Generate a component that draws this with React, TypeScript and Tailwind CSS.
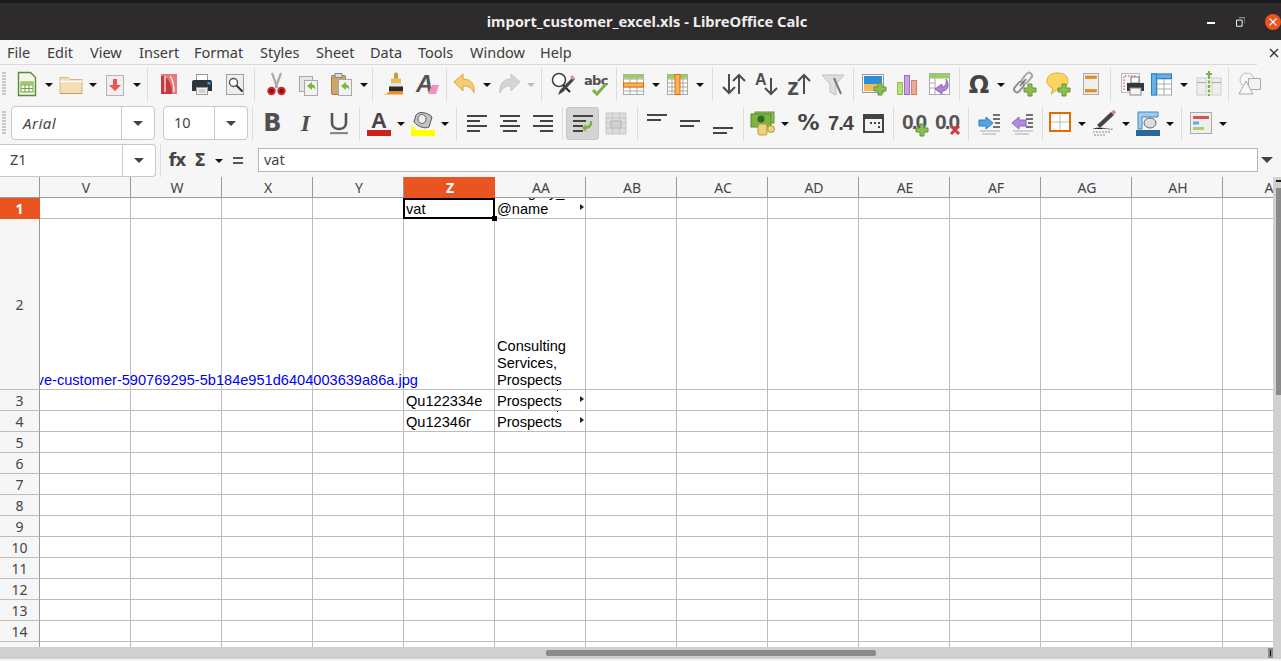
import type { ReactNode } from "react"

const ink = "#4d4d4d"

function Svg({ children }: { children: ReactNode }) {
  return (
    <svg width="26" height="26" viewBox="0 0 26 26" className="block overflow-visible">
      {children}
    </svg>
  )
}

// toolbar slot for an icon
function I({ children, className = "" }: { children?: ReactNode; className?: string }) {
  return <div className={`w-[33px] h-[33px] shrink-0 flex items-center justify-center ${className}`}>{children}</div>
}

// little dropdown arrow
function A({ className = "" }: { className?: string }) {
  return (
    <div className={`w-[11px] shrink-0 flex justify-center ${className}`}>
      <div className="w-0 h-0 border-l-[4px] border-r-[4px] border-t-[4px] border-l-transparent border-r-transparent border-t-[#111] mt-[2px]" />
    </div>
  )
}

function S({ className = "ml-[3px] mr-[4px]" }: { className?: string }) {
  return <div className={`w-px h-[33px] bg-[#dcdcdc] shrink-0 ${className}`} />
}

function Grip() {
  return (
    <div className="w-[4px] h-[24px] ml-[2px] shrink-0 flex flex-col gap-[1px]">
      {[0, 1, 2, 3, 4, 5, 6, 7].map((i) => (
        <div key={i} className="h-[2px] bg-[#c8c8c8]" />
      ))}
    </div>
  )
}

const GreenPlus = ({ x = 17, y = 17 }: { x?: number; y?: number }) => (
  <path d={`M${x - 2} ${y - 6}h4v4h4v4h-4v4h-4v-4h-4v-4h4z`} fill="#8cc152" stroke="#5f9433" strokeWidth="1" />
)

const NewDoc = () => (
  <Svg>
    <path d="M4.500 1.500h12l5 5v18h-17z" fill="#f2f7e6" stroke="#5d8a3a" strokeWidth="1.4" />
    <rect x="7" y="11" width="12" height="10" fill="#fff" stroke="#6fa046" />
    <path d="M7 14h12M7 17.500h12M11 11v10M15 11v10" stroke="#6fa046" />
    <rect x="7" y="11" width="12" height="3" fill="#9dc96b" />
  </Svg>
)
const Folder = () => (
  <Svg>
    <path d="M2 6.500h8l2 2h12v14H2z" fill="#f6deb4" stroke="#cdb78f" />
    <path d="M2 10.500h22" stroke="#fff" strokeWidth="1.5" />
    <path d="M2 22.500h22" stroke="#b99d6c" />
  </Svg>
)
const Save = () => (
  <Svg>
    <rect x="4.500" y="4.500" width="17" height="20" fill="#f1eeee" stroke="#b5b5b5" />
    <path d="M11 8h4v6h4l-6 6-6-6h4z" fill="#ef5350" />
  </Svg>
)
const Pdf = () => (
  <Svg>
    <rect x="5" y="3" width="16" height="20" fill="#c9363d" />
    <path d="M5 3h16v20h-5C16 15 14 9 8 5l-3 0z" fill="#e27b7f" />
    <path d="M9 5v16M14 5c4 5 4 12 4 16" stroke="#fff" strokeWidth="1.2" fill="none" />
  </Svg>
)
const Printer = () => (
  <Svg>
    <rect x="7.500" y="3.500" width="11" height="8" fill="#fff" stroke="#9a9a9a" />
    <path d="M3 11a2 2 0 0 1 2-2h16a2 2 0 0 1 2 2v9H3z" fill="#2f3437" />
    <rect x="18.500" y="11" width="3" height="2.500" fill="#2aa3e0" />
    <rect x="7.500" y="16.500" width="11" height="7" fill="#f4f4f4" stroke="#9a9a9a" />
    <path d="M9.500 19h7M9.500 21h7" stroke="#b0b0b0" />
  </Svg>
)
const Preview = () => (
  <Svg>
    <rect x="4.500" y="3.500" width="17" height="20" fill="#eee" stroke="#a0a0a0" />
    <circle cx="11.500" cy="11.500" r="4" fill="#fff" stroke="#555" strokeWidth="1.4" />
    <path d="M14.500 14.500l6 6" stroke="#333" strokeWidth="2" />
  </Svg>
)
const Cut = () => (
  <Svg>
    <path d="M9 2l5.500 15M18 2l-5.500 15" stroke="#aaa" strokeWidth="2.2" />
    <circle cx="8.500" cy="20" r="3.200" fill="#7d1414" stroke="#d2272b" strokeWidth="2" />
    <circle cx="18.500" cy="20" r="3.200" fill="#7d1414" stroke="#d2272b" strokeWidth="2" />
  </Svg>
)
const Copy = () => (
  <Svg>
    <rect x="3.500" y="5.500" width="13" height="15" fill="#e6e6e6" stroke="#a8a8a8" />
    <rect x="8.500" y="9.500" width="13" height="15" fill="#f3f3f3" stroke="#a8a8a8" />
    <path d="M16 11l-5 4 5 4v-2.500c2 0 3 1 3 3 1-4-1-6-3-6z" fill="#79b83a" />
  </Svg>
)
const Paste = () => (
  <Svg>
    <rect x="2.500" y="4.500" width="14" height="19" rx="1" fill="#cfa46b" stroke="#9c7b4d" />
    <rect x="6" y="2.500" width="7" height="4" fill="#ddd" stroke="#888" />
    <rect x="9.500" y="8.500" width="13" height="16" fill="#f3f3f3" stroke="#a8a8a8" />
    <path d="M17 11l-5 4 5 4v-2.500c2 0 3 1 3 3 1-4-1-6-3-6z" fill="#79b83a" />
  </Svg>
)
const Clone = () => (
  <Svg>
    <rect x="13" y="1.500" width="4" height="7" rx="1.500" fill="#c99b4a" />
    <rect x="10" y="7.500" width="10" height="5" fill="#e9b95b" />
    <rect x="9" y="12.500" width="12" height="3" fill="#e8e8e8" />
    <path d="M8 15.500h14v5H8z" fill="#2b2b2b" />
    <path d="M8 20.500h14l0 3H1c4 0 6-1 7-3z" fill="#f28c1e" />
  </Svg>
)
const Clear = () => (
  <Svg>
    <text x="2" y="21" fontFamily="'Liberation Sans',sans-serif" fontSize="24" fontWeight="700" fontStyle="italic" fill="#555">A</text>
    <path d="M18 14h7l-3 9h-8z" fill="#f48fc0" />
  </Svg>
)
const Undo = ({ gray }: { gray?: boolean }) => (
  <svg width="26" height="26" viewBox="0 0 26 26" className={`block ${gray ? "-scale-x-100" : ""}`}>
    <path d="M2 11l9-8v5c7 0 12 4 11 14-2-5-5-7-11-7v5z" fill={gray ? "#d4d4d4" : "#f6cd73"} stroke={gray ? "#c8c8c8" : "#dda73f"} />
  </svg>
)
const Find = () => (
  <Svg>
    <circle cx="9" cy="9" r="6.500" fill="#fff" stroke="#444" strokeWidth="1.6" />
    <path d="M13 14l7 7" stroke="#222" strokeWidth="2" />
    <path d="M23 6l2 2-12 13-5 3 2-5z" fill="#444" />
    <path d="M22 4l3 3-2 2-3-3z" fill="#e38bc6" />
  </Svg>
)
const Spell = () => (
  <Svg>
    <text x="1" y="14" fontFamily="'DejaVu Sans',sans-serif" fontWeight="700" fontSize="13" letterSpacing="-0.7" fill="#505050">abc</text>
    <path d="M10 19l4 4 9-10" fill="none" stroke="#7cb342" strokeWidth="3" />
  </Svg>
)
const TableRow = () => (
  <Svg>
    <rect x="2.500" y="3.500" width="20" height="20" fill="#fff" stroke="#aaa" />
    <path d="M2.500 8h20M2.500 16h20M2.500 20h20M9 3.500v20M16 3.500v20" stroke="#aaa" />
    <rect x="2.500" y="3.500" width="20" height="4" fill="#9ccc65" />
    <rect x="2.500" y="12" width="20" height="4" fill="#f9b25a" stroke="#e56a00" />
  </Svg>
)
const TableCol = () => (
  <Svg>
    <rect x="2.500" y="3.500" width="20" height="20" fill="#fff" stroke="#aaa" />
    <path d="M2.500 8h20M2.500 12h20M2.500 16h20M2.500 20h20M7 3.500v20M18 3.500v20" stroke="#aaa" />
    <rect x="2.500" y="3.500" width="20" height="4" fill="#9ccc65" />
    <rect x="10" y="3.500" width="5" height="20" fill="#f9b25a" stroke="#e56a00" />
  </Svg>
)
const SortIcon = () => (
  <Svg>
    <path d="M8 3v19M2 16l6 6 6-6M18 23V4M12 10l6-6 6 6" fill="none" stroke={ink} strokeWidth="2" />
  </Svg>
)
const SortAsc = () => (
  <Svg>
    <text x="1" y="14" fontFamily="'Liberation Sans',sans-serif" fontWeight="700" fontSize="16" fill={ink}>A</text>
    <path d="M17 7v16M11 17l6 6 6-6" fill="none" stroke={ink} strokeWidth="2" />
  </Svg>
)
const SortDesc = () => (
  <Svg>
    <text x="0" y="24" fontFamily="'Liberation Sans',sans-serif" fontWeight="700" fontSize="24" fill={ink}>z</text>
    <path d="M17 23V4M11 10l6-6 6 6" fill="none" stroke={ink} strokeWidth="2" />
  </Svg>
)
const Filter = () => (
  <Svg>
    <path d="M2 4h22l-8 9v11l-6-3v-8z" fill="#dedede" stroke="#c0c0c0" />
    <path d="M14 7l7 16" stroke="#777" strokeWidth="2" />
  </Svg>
)
const ImageIcon = () => (
  <Svg>
    <rect x="1.500" y="3.500" width="21" height="18" fill="#fff" stroke="#999" />
    <rect x="3" y="5" width="18" height="8" fill="#2c8fdc" />
    <rect x="3" y="13" width="18" height="7" fill="#f5b85a" />
    <GreenPlus x={19} y={18} />
  </Svg>
)
const Chart = () => (
  <Svg>
    <rect x="3.500" y="11.500" width="5" height="12" fill="#b6e27a" stroke="#8fbe52" />
    <rect x="10.500" y="4.500" width="5" height="19" fill="#c9a2e2" stroke="#9a6fc0" />
    <rect x="17.500" y="9.500" width="5" height="14" fill="#f0a794" stroke="#d57f6a" />
  </Svg>
)
const Pivot = () => (
  <Svg>
    <rect x="2.500" y="2.500" width="20" height="21" fill="#fff" stroke="#aaa" />
    <path d="M8 2.500v21M2.500 12h6M2.500 17h6" stroke="#aaa" />
    <rect x="2.500" y="2.500" width="20" height="5" fill="#9ccc65" />
    <path d="M8 18l7-5v3c3 0 5-3 4-8 4 6 2 12-4 12v3z" fill="#b184dc" stroke="#8a5fb5" />
  </Svg>
)
const Omega = () => (
  <Svg>
    <text x="13" y="22" textAnchor="middle" fontFamily="'DejaVu Sans',sans-serif" fontWeight="700" fontSize="24" fill="#444">Ω</text>
  </Svg>
)
const LinkIcon = () => (
  <Svg>
    <rect x="-6" y="-3" width="12" height="6" rx="3" transform="translate(8 16) rotate(-50)" fill="none" stroke="#8f8f8f" strokeWidth="2" />
    <rect x="-6" y="-3" width="12" height="6" rx="3" transform="translate(16 7) rotate(-50)" fill="none" stroke="#a8a8a8" strokeWidth="2" />
    <path d="M9 15l6-7" stroke="#777" strokeWidth="1.6" />
    <GreenPlus x={19} y={19} />
  </Svg>
)
const Comment = () => (
  <Svg>
    <path d="M12 2c7 0 11 3 11 8s-4 8-10 8l-7 5 2-6c-4-1-6-4-6-7 0-5 4-8 10-8z" fill="#fbd35f" stroke="#dcae3c" />
    <GreenPlus x={19} y={19} />
  </Svg>
)
const Headers = () => (
  <Svg>
    <rect x="5.500" y="2.500" width="15" height="21" fill="#eee" stroke="#aaa" />
    <rect x="7.500" y="5" width="11" height="2.500" fill="#f28c1e" stroke="#d46b00" strokeWidth="0.5" />
    <rect x="7.500" y="18.500" width="11" height="2.500" fill="#f28c1e" stroke="#d46b00" strokeWidth="0.5" />
  </Svg>
)
const PrintArea = () => (
  <Svg>
    <rect x="1.500" y="2.500" width="18" height="19" fill="#f6f6f6" stroke="#bbb" />
    <path d="M4 19V5h13" fill="none" stroke="#e33" strokeDasharray="1.500 1.500" />
    <rect x="11" y="6" width="8" height="6" fill="#fff" stroke="#777" />
    <path d="M7 12h17v8H7z" fill="#33383b" />
    <rect x="10" y="17" width="11" height="7" fill="#f4f4f4" stroke="#888" />
  </Svg>
)
const Freeze = () => (
  <Svg>
    <rect x="2.500" y="3" width="20" height="21" fill="#fff" stroke="#aaa" />
    <path d="M2.500 8h20M2.500 13h20M2.500 18h20M8 3v21M15 3v21" stroke="#aaa" />
    <rect x="2.500" y="3" width="20" height="4.500" fill="#67b1e8" stroke="#2a81c9" />
    <rect x="2.500" y="3" width="5" height="21" fill="#67b1e8" stroke="#2a81c9" />
  </Svg>
)
const Split = () => (
  <Svg>
    <rect x="1" y="7" width="9" height="17" fill="#eee" stroke="#ccc" />
    <rect x="16" y="7" width="9" height="17" fill="#eee" stroke="#ccc" />
    <path d="M1 11.500h9M16 11.500h9" stroke="#aaa" />
    <path d="M13 5v20" stroke="#7cb342" strokeWidth="2.500" strokeDasharray="3 1.500" />
    <path d="M13 0v6M10 3h6" stroke="#7cb342" strokeWidth="2" />
  </Svg>
)
const Shapes = () => (
  <Svg>
    <circle cx="10" cy="9" r="7" fill="#f7f7f7" stroke="#bbb" />
    <rect x="11.500" y="7.500" width="12" height="11" fill="#f2f2f2" stroke="#aaa" />
    <path d="M9 10l7 13H2z" fill="#f7f7f7" stroke="#aaa" />
  </Svg>
)
const Bold = () => <span className="text-[24px] leading-none font-bold text-[#505050] font-['DejaVu_Sans',sans-serif]">B</span>
const Italic = () => <span className="text-[24px] leading-none font-bold italic text-[#505050] font-['Liberation_Serif',serif]">I</span>
const Underline = () => (
  <Svg>
    <path d="M6 3v10c0 8 14 8 14 0V3" fill="none" stroke="#555" strokeWidth="2.600" />
    <rect x="4" y="22" width="18" height="2.200" fill="#888" />
  </Svg>
)
const FontColor = () => (
  <Svg>
    <text x="13" y="18" textAnchor="middle" fontFamily="'Liberation Sans',sans-serif" fontWeight="700" fontSize="22" fill="#444">A</text>
    <rect x="1" y="20" width="24" height="6" fill="#c9211e" />
  </Svg>
)
const Highlight = () => (
  <Svg>
    <path d="M6 5c3-4 11-3 16 2l-3 10c-4 2-11 0-15-5z" fill="#c4c4c4" stroke="#555" />
    <ellipse cx="12" cy="9" rx="4" ry="4.500" fill="#f0f0f0" stroke="#666" />
    <path d="M2 14c1 2 2 4 4 6H1z" fill="#ffff00" />
    <rect x="1" y="20" width="24" height="6" fill="#ffff00" />
  </Svg>
)
const Lines = ({ rows }: { rows: [number, number][] }) => (
  <Svg>
    {rows.map(([x, w], i) => (
      <rect key={i} x={x} y={5 + i * 5} width={w} height="2" fill="#444" />
    ))}
  </Svg>
)
const Wrap = () => (
  <Svg>
    <rect x="3" y="5" width="20" height="2" fill="#444" />
    <rect x="3" y="10" width="13" height="2" fill="#444" />
    <rect x="3" y="15" width="10" height="2" fill="#444" />
    <rect x="3" y="20" width="10" height="2" fill="#444" />
    <path d="M22 11c1 6-3 8-6 8v3l-4-4 4-4v2c2 0 4-1 4-5z" fill="#7cb342" />
  </Svg>
)
const Merge = () => (
  <Svg>
    <rect x="3" y="3" width="20" height="21" fill="#dcdcdc" stroke="#c6c6c6" />
    <path d="M3 8h20M3 13h20M3 18h20M9.500 3v21M16.500 3v21" stroke="#c6c6c6" />
    <rect x="8" y="11" width="10" height="7" fill="#d2d2d2" stroke="#b5b5b5" />
  </Svg>
)
const Bar = ({ y }: { y: number }) => (
  <Svg>
    <rect x="3" y={y} width="20" height="2" fill="#444" />
    <rect x="3" y={y + 5} width="14" height="2" fill="#444" />
  </Svg>
)
const Currency = () => (
  <Svg>
    <rect x="5" y="2" width="19" height="11" fill="#93c455" stroke="#5d8f33" />
    <rect x="1" y="4" width="20" height="13" fill="#7cb342" stroke="#558b2f" />
    <circle cx="11" cy="9" r="3.500" fill="#2f6b1f" />
    <rect x="8" y="14" width="9" height="11" rx="2" fill="#ecd27a" stroke="#b3954a" />
    <circle cx="21" cy="19" r="3.500" fill="#ecd27a" stroke="#b3954a" />
  </Svg>
)
const DateIcon = () => (
  <Svg>
    <rect x="2" y="4" width="21" height="19" fill="#444" />
    <rect x="4" y="9" width="17" height="12" fill="#f3f3f3" />
    <path d="M9 12h2v2H9zM13 12h2v2h-2zM17 12h2v2h-2zM17 16h2v2h-2z" fill="#444" />
  </Svg>
)
const Decimal = ({ add }: { add?: boolean }) => (
  <Svg>
    <text x="0" y="19" fontFamily="'Liberation Sans',sans-serif" fontWeight="700" fontSize="21" letterSpacing="-2" fill="#555">0.0</text>
    {add ? <GreenPlus x={20} y={20} /> : <path d="M16 16l8 8M24 16l-8 8" stroke="#d33b3b" strokeWidth="3" />}
  </Svg>
)
const Indent = ({ back }: { back?: boolean }) => (
  <Svg>
    <path d={back ? "M2 13l7-6v3h7v6H9v3z" : "M16 13l-7-6v3H2v6h7v3z"} fill={back ? "#b18be0" : "#4ea6e6"} stroke={back ? "#8e63c8" : "#2b7fc2"} />
    <path d="M16 5h7M16 9h7M18 13h5M16 17h7" stroke="#444" strokeWidth="1.600" />
    <path d="M3 21h20M5 24h14" stroke="#aaa" />
  </Svg>
)
const Border = () => (
  <Svg>
    <rect x="3" y="3" width="20" height="18" fill="#fff" stroke="#e56a00" strokeWidth="2" />
    <path d="M13 4v16M4 12h18" stroke="#bbb" />
  </Svg>
)
const LineStyle = () => (
  <Svg>
    <path d="M6 15L20 2l3 3L9 18z" fill="#444" />
    <path d="M20 2l3 3 2-3-2-2z" fill="#d77bc7" />
    <path d="M2 19c7-3 14 1 20 0M2 22h18M3 25h12" stroke="#888" strokeDasharray="2 1" />
  </Svg>
)
const BgColor = () => (
  <Svg>
    <path d="M3 2h20v5H7v12H3z" fill="#9ecbea" stroke="#3c8bc6" />
    <ellipse cx="15" cy="13" rx="6" ry="5" fill="#ddd" stroke="#666" />
    <rect x="1" y="20" width="24" height="6" fill="#2b6699" />
  </Svg>
)
const Cond = () => (
  <Svg>
    <rect x="2.500" y="2.500" width="21" height="21" fill="#eee" stroke="#aaa" />
    <rect x="5" y="6" width="16" height="3" fill="#d9534f" />
    <rect x="5" y="11.500" width="6" height="3" fill="#5dade2" />
    <rect x="5" y="17" width="11" height="3" fill="#a5d46a" />
  </Svg>
)

const menus: [string, string][] = [
  ["File", "w-[40px]"],
  ["Edit", "w-[43px]"],
  ["View", "w-[49px]"],
  ["Insert", "w-[55px]"],
  ["Format", "w-[66px]"],
  ["Styles", "w-[56px]"],
  ["Sheet", "w-[54px]"],
  ["Data", "w-[48px]"],
  ["Tools", "w-[52px]"],
  ["Window", "w-[70px]"],
  ["Help", "w-[50px]"],
]

const columns = ["V", "W", "X", "Y", "Z", "AA", "AB", "AC", "AD", "AE", "AF", "AG", "AH", "A"]

function Marker() {
  return <div className="absolute right-[1px] top-[6px] w-0 h-0 border-y-[3px] border-l-[4px] border-y-transparent border-l-[#222]" />
}

function Cell({ children, className = "" }: { children?: ReactNode; className?: string }) {
  return (
    <div className={`relative w-[91px] shrink-0 border-r border-b border-[#bdbdbd] bg-white text-[14.6px] text-black font-['Liberation_Sans',sans-serif] ${className}`}>
      {children}
    </div>
  )
}

function Row({ label, h, cells, active }: { label: string; h: string; cells?: Record<string, ReactNode>; active?: boolean }) {
  return (
    <div className={`flex ${h} shrink-0`}>
      <div
        className={`w-[40px] shrink-0 flex items-center justify-center text-[14px] border-b border-r font-['Noto_Sans',sans-serif] ${
          active ? "bg-[#e95420] text-white font-bold border-[#e95420]" : "bg-[#f6f6f6] text-[#444] border-b-[#bdbdbd] border-r-[#9a9a9a]"
        }`}
      >
        {label}
      </div>
      {columns.map((c) => (
        <Cell key={c}>{cells?.[c]}</Cell>
      ))}
    </div>
  )
}

const bottomText = "absolute left-[2px] -bottom-px leading-[20px] whitespace-nowrap"

function Prospects() {
  return (
    <>
      <div className="absolute left-[62px] top-0 w-px h-px bg-black" />
      <div className={bottomText}>Prospects</div>
      <Marker />
    </>
  )
}

export default function App() {
  return (
    <div className="w-[1281px] h-[661px] overflow-hidden flex flex-col bg-[#f6f6f6] font-['Noto_Sans',sans-serif]">
      {/* title bar */}
      <div className="h-[40px] shrink-0 flex items-center bg-[#2d2b2b] border-t-[3px] border-[#1b1b1b]">
        <div className="w-[88px] shrink-0" />
        <div className="flex-1 text-center text-[14.7px] font-bold text-[#eeeeee]">import_customer_excel.xls - LibreOffice Calc</div>
        <div className="w-[75px] shrink-0 flex items-center">
          <div className="w-[8px] h-[1.5px] bg-white ml-[1px] mt-[3px]" />
          <svg width="10" height="10" viewBox="0 0 10 10" className="ml-[21px]">
            <path d="M.5 3h6v6.500h-6z" fill="none" stroke="#fff" />
            <path d="M3 .5h6.500v6" fill="none" stroke="#aaa" />
          </svg>
          <div className="ml-[20px] w-[16px] h-[16px] rounded-full bg-[#e95420] flex items-center justify-center shrink-0">
            <svg width="8" height="8" viewBox="0 0 8 8">
              <path d="M.5.5l7 7M7.500.5l-7 7" stroke="#fff" strokeWidth="1.2" />
            </svg>
          </div>
        </div>
      </div>

      {/* menu */}
      <div className="h-[25px] shrink-0 flex items-center pl-[7px] text-[14.5px] text-[#3c3c3c] relative">
        <div className="absolute left-0 bottom-0 w-[1257px] h-px bg-[#d9d9d9]" />
        {menus.map(([m, w]) => (
          <div key={m} className={w}>{m}</div>
        ))}
        <svg width="10" height="10" viewBox="0 0 10 10" className="ml-auto mr-[2px]">
          <path d="M1 1l8 8M9 1l-8 8" stroke="#333" strokeWidth="1.3" />
        </svg>
      </div>

      {/* standard toolbar */}
      <div className="h-[39px] shrink-0 flex items-center pb-px">
        <Grip />
        <I className="ml-[4px]"><NewDoc /></I><A />
        <I><Folder /></I><A />
        <I><Save /></I><A />
        <S className="ml-[5px] mr-[4px]" />
        <I><Pdf /></I><I><Printer /></I><I><Preview /></I>
        <S />
        <I><Cut /></I><I><Copy /></I><I><Paste /></I><A />
        <S />
        <I><Clone /></I><I><Clear /></I>
        <S className="ml-[3px] mr-px" />
        <I><Undo /></I><A />
        <I><Undo gray /></I>
        <div className="w-[11px] shrink-0 flex justify-center">
          <div className="w-0 h-0 border-l-[4px] border-r-[4px] border-t-[4px] border-l-transparent border-r-transparent border-t-[#bbb] mt-[2px]" />
        </div>
        <S className="ml-[5px] mr-[4px]" />
        <I><Find /></I><I><Spell /></I>
        <S className="ml-[4px]" />
        <I><TableRow /></I><A />
        <I><TableCol /></I><A />
        <S className="ml-[7px] mr-[4px]" />
        <I><SortIcon /></I><I><SortAsc /></I><I><SortDesc /></I><I><Filter /></I>
        <S className="ml-[4px] mr-[3px]" />
        <I><ImageIcon /></I><I><Chart /></I><I><Pivot /></I>
        <S className="ml-[3px] mr-[2px]" />
        <I><Omega /></I><A />
        <I className="ml-px"><LinkIcon /></I>
        <I className="ml-px"><Comment /></I>
        <I><Headers /></I>
        <S className="ml-[3px] mr-[5px]" />
        <I><PrintArea /></I>
        <I className="-ml-[4px]"><Freeze /></I><A />
        <I className="ml-[3px]"><Split /></I>
        <S />
        <I><Shapes /></I>
      </div>

      {/* formatting toolbar */}
      <div className="h-[39px] shrink-0 flex items-center pb-px">
        <Grip />
        <div className="ml-[5px] w-[144px] h-[34px] shrink-0 flex bg-white border border-[#c8c8c8] rounded-[4px]">
          <div className="flex-1 flex items-center pl-[11px] italic text-[15px] tracking-[0.5px] text-[#444]">Arial</div>
          <div className="w-[33px] border-l border-[#c8c8c8] flex items-center justify-center">
            <div className="w-0 h-0 border-l-[5px] border-r-[5px] border-t-[5px] border-l-transparent border-r-transparent border-t-[#444]" />
          </div>
        </div>
        <div className="ml-[8px] w-[85px] h-[34px] shrink-0 flex bg-white border border-[#c8c8c8] rounded-[4px]">
          <div className="flex-1 flex items-center pl-[10px] text-[14.5px] text-[#444]">10</div>
          <div className="w-[33px] border-l border-[#c8c8c8] flex items-center justify-center">
            <div className="w-0 h-0 border-l-[5px] border-r-[5px] border-t-[5px] border-l-transparent border-r-transparent border-t-[#444]" />
          </div>
        </div>
        <S className="ml-[4px] mr-[3px]" />
        <I><Bold /></I><I><Italic /></I><I><Underline /></I>
        <S className="ml-[4px] mr-[2px]" />
        <I><FontColor /></I><A />
        <I><Highlight /></I><A />
        <S className="ml-[6px] mr-[3px]" />
        <I><Lines rows={[[3, 20], [3, 13], [3, 20], [3, 13]]} /></I>
        <I><Lines rows={[[3, 20], [6, 14], [3, 20], [6, 14]]} /></I>
        <I><Lines rows={[[3, 20], [10, 13], [3, 20], [10, 13]]} /></I>
        <S className="ml-[3px] mr-[3px]" />
        <I className="bg-[#d4d4d4] border border-[#c6c6c6] rounded-[3px]"><Wrap /></I>
        <I><Merge /></I>
        <S className="ml-[5px] mr-[2px]" />
        <I><Bar y={4} /></I><I><Bar y={10} /></I><I><Bar y={17} /></I>
        <S className="ml-[4px] mr-[2px]" />
        <I><Currency /></I><A />
        <I className="ml-px"><span className="text-[22px] font-bold text-[#444] leading-none font-['DejaVu_Sans',sans-serif] tracking-[-2px]">%</span></I>
        <I><span className="text-[20px] font-bold text-[#444] leading-none tracking-[-1px] font-['Liberation_Sans',sans-serif]">7.4</span></I>
        <I><DateIcon /></I>
        <S />
        <I><Decimal add /></I><I><Decimal /></I>
        <S className="ml-[4px] mr-[4px]" />
        <I><Indent /></I><I><Indent back /></I>
        <S className="ml-[3px] mr-0" />
        <I><Border /></I><A />
        <I><LineStyle /></I><A />
        <I><BgColor /></I><A />
        <S className="ml-[6px] mr-[2px]" />
        <I><Cond /></I><A />
      </div>

      {/* formula bar */}
      <div className="h-[34px] shrink-0 flex items-center">
        <div className="w-[156px] h-[33px] shrink-0 flex bg-white border border-l-0 border-[#c8c8c8] rounded-r-[4px]">
          <div className="flex-1 flex items-center pl-[10px] text-[14.5px] text-[#444]">Z1</div>
          <div className="w-[33px] border-l border-[#c8c8c8] flex items-center justify-center">
            <div className="w-0 h-0 border-l-[5px] border-r-[5px] border-t-[5px] border-l-transparent border-r-transparent border-t-[#444]" />
          </div>
        </div>
        <S className="ml-[4px] mr-0 h-[24px]" />
        <div className="w-[32px] shrink-0 text-center text-[17px] font-bold text-[#444] font-['DejaVu_Sans',sans-serif] leading-none tracking-[-1px]">fx</div>
        <div className="w-[14px] shrink-0 text-center text-[17px] font-bold text-[#444] font-['DejaVu_Sans',sans-serif] leading-none">Σ</div>
        <A className="ml-[6px]" />
        <div className="w-[28px] shrink-0 flex flex-col items-center gap-[3px]">
          <div className="w-[10px] h-[2px] bg-[#555]" />
          <div className="w-[10px] h-[2px] bg-[#555]" />
        </div>
        <div className="ml-[6px] w-[1000px] h-[24px] shrink-0 flex items-center pl-[5px] bg-white border border-[#b5b5b5] text-[14.5px] text-[#444]">vat</div>
        <div className="ml-[3px] w-0 h-0 border-l-[6px] border-r-[6px] border-t-[6px] border-l-transparent border-r-transparent border-t-[#444]" />
      </div>

      {/* sheet */}
      <div className="flex-1 min-h-0 flex flex-col">
        <div className="flex-1 min-h-0 flex">
          <div className="flex-1 min-w-0 overflow-hidden flex flex-col">
            <div className="flex h-[21px] shrink-0 text-[14px] text-[#444]">
              <div className="w-[40px] shrink-0 bg-[#f6f6f6] border-b border-r border-[#9a9a9a]" />
              {columns.map((c) => (
                <div
                  key={c}
                  className={`w-[91px] shrink-0 flex items-center justify-center pl-[2px] border-b border-r ${
                    c === "Z" ? "bg-[#e95420] text-white font-bold border-[#e95420]" : "bg-[#f6f6f6] border-[#9a9a9a]"
                  }`}
                >
                  {c}
                </div>
              ))}
            </div>
            <Row
              label="1"
              h="h-[21px]"
              active
              cells={{
                Z: (
                  <>
                    <div className={bottomText}>vat</div>
                    {/* cell cursor */}
                    <div className="absolute -left-px top-0 w-[92px] h-[21px] border-2 border-black z-10" />
                    <div className="absolute -right-[3px] -bottom-[3px] w-[5px] h-[5px] bg-black z-10" />
                  </>
                ),
                AA: (
                  <div className="absolute inset-0 overflow-hidden">
                    <div className="absolute left-[2px] -bottom-px leading-[17px] pb-[1px]">
                      <div>Category_</div>
                      <div>@name</div>
                    </div>
                    <Marker />
                  </div>
                ),
              }}
            />
            <div className="relative shrink-0">
              <Row
                label="2"
                h="h-[171px]"
                cells={{
                  AA: (
                    <div className="absolute left-[2px] bottom-0 leading-[17px]">
                      Consulting
                      <br />
                      Services,
                      <br />
                      Prospects
                    </div>
                  ),
                }}
              />
              <div className="absolute left-[40px] bottom-0 w-[378px] h-[20px] overflow-hidden flex justify-end text-[14.6px] leading-[20px] text-[#0000ee] whitespace-nowrap font-['Liberation_Sans',sans-serif]">
                ve-customer-590769295-5b184e951d6404003639a86a.jpg
              </div>
            </div>
            <Row label="3" h="h-[21px]" cells={{ Z: <div className={bottomText}>Qu122334e</div>, AA: <Prospects /> }} />
            <Row label="4" h="h-[21px]" cells={{ Z: <div className={bottomText}>Qu12346r</div>, AA: <Prospects /> }} />
            {["5", "6", "7", "8", "9", "10", "11", "12", "13", "14", ""].map((n, i) => (
              <Row key={i} label={n} h="h-[21px]" />
            ))}
          </div>
          {/* vertical scrollbar */}
          <div className="w-[8px] shrink-0 bg-[#d0d0d0] flex flex-col items-end">
            <div className="w-[5px] h-[2px] bg-[#222] mt-[3px]" />
            <div className="w-[5px] h-[207px] bg-[#8a8a8a] mt-[6px]" />
          </div>
        </div>
        {/* horizontal scrollbar */}
        <div className="h-[12px] shrink-0 bg-[#d0d0d0] flex items-center pr-[8px]">
          <div className="ml-[546px] w-[330px] h-[6px] rounded-[2px] bg-[#8a8a8a]" />
          <div className="ml-auto w-[5px] h-[10px] bg-[#8a8a8a] flex items-center justify-center">
            <div className="w-px h-[6px] bg-[#111]" />
          </div>
        </div>
        <div className="h-[2px] shrink-0 bg-[#f6f6f6]" />
      </div>
    </div>
  )
}
